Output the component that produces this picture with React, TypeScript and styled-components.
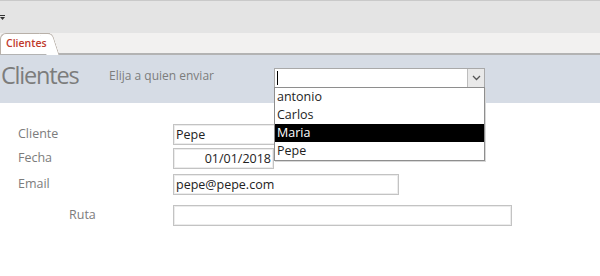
import React from "react";
import styled, { createGlobalStyle } from "styled-components";

const Global = createGlobalStyle`
  html, body { margin: 0; padding: 0; background: #ffffff; }
  body { width: 600px; height: 276px; overflow: hidden; font-family: "Open Sans", "Noto Sans", sans-serif; }
  * { box-sizing: border-box; }
`;

const Page = styled.div`
  width: 600px;
  height: 276px;
  display: flex;
  flex-direction: column;
  background: #ffffff;
`;

const QuickBar = styled.div`
  height: 33px;
  background: #e4e4e4;
  border-top: 1px solid #c9c9c9;
  display: flex;
  align-items: center;
  padding-left: 0;
`;

const QuickIcon = styled.svg`
  width: 5px;
  height: 5px;
`;

const TabStrip = styled.div`
  height: 22px;
  background: #f2f1f0;
  border-bottom: 2px solid #b3b3b3;
  display: flex;
  align-items: flex-end;
`;

const Tab = styled.div`
  position: relative;
  height: 21px;
  width: 50px;
  margin-bottom: -1px;
  background: #ffffff;
  border-top: 1px solid #b8b0a8;
  border-left: 1px solid #b8b0a8;
  border-top-left-radius: 6px;
  color: #c0392b;
  font-size: 10.5px;
  font-weight: 600;
  line-height: 19px;
  padding-left: 5px;
  z-index: 1;
  &::after {
    content: "";
    position: absolute;
    top: -1px;
    right: -6px;
    width: 12px;
    height: 21px;
    background: #ffffff;
    border-top: 1px solid #b8b0a8;
    border-right: 1px solid #b8b0a8;
    border-top-right-radius: 5px;
    transform: skewX(18deg);
    z-index: -1;
  }
`;

const Header = styled.div`
  position: relative;
  height: 48px;
  background: #d6dce5;
  display: flex;
  align-items: flex-start;
`;

const Title = styled.div`
  margin-left: 1px;
  margin-top: 4px;
  font-size: 23.5px;
  letter-spacing: -1.2px;
  line-height: 32px;
  color: #7c7c7c;
  width: 108px;
`;

const Prompt = styled.div`
  margin-top: 12px;
  font-size: 12px;
  line-height: 18px;
  color: #7c7c7c;
  width: 165px;
`;

const ComboWrap = styled.div`
  position: relative;
  margin-top: 13px;
  width: 211px;
`;

const Combo = styled.div`
  height: 20px;
  width: 211px;
  background: #ffffff;
  border: 1px solid #a9a9a9;
  display: flex;
  align-items: stretch;
`;

const Caret = styled.div`
  width: 1px;
  height: 14px;
  background: #000;
  margin: 2px 0 0 2px;
`;

const ComboButton = styled.div`
  margin-left: auto;
  width: 17px;
  background: #e9e9e9;
  border-left: 1px solid #bdbdbd;
  display: flex;
  align-items: center;
  justify-content: center;
`;

const List = styled.div`
  position: absolute;
  top: 19px;
  left: 0;
  width: 211px;
  background: #ffffff;
  border: 1px solid #8e8e8e;
  z-index: 5;
  box-shadow: 1px 1px 0 #d8d8d8;
`;

const Item = styled.div<{ $selected?: boolean }>`
  height: 18px;
  line-height: 18px;
  padding-left: 2px;
  font-size: 12.5px;
  color: ${(p) => (p.$selected ? "#ffffff" : "#1e1e1e")};
  background: ${(p) => (p.$selected ? "#000000" : "transparent")};
`;

const Form = styled.div`
  display: flex;
  flex-direction: column;
  padding-top: 21px;
`;

const Row = styled.div<{ $gap: number }>`
  display: flex;
  align-items: center;
  margin-top: ${(p) => p.$gap}px;
  height: 21px;
`;

const Label = styled.div<{ $indent: number }>`
  width: 173px;
  padding-left: ${(p) => p.$indent}px;
  font-size: 12.5px;
  line-height: 18px;
  margin-top: -2px;
  color: #7c7c7c;
`;

const Field = styled.div<{ $width: number; $align?: string }>`
  width: ${(p) => p.$width}px;
  height: 21px;
  border: 1px solid #c3c3c3;
  box-shadow: inset 0 0 0 1px #ececec;
  font-size: 12.5px;
  line-height: 19px;
  color: #222222;
  padding: 0 2px;
  text-align: ${(p) => p.$align || "left"};
  background: #ffffff;
`;

const items = ["antonio", "Carlos", "Maria", "Pepe"];

export default function App() {
  return (
    <Page>
      <Global />
      <QuickBar>
        <QuickIcon viewBox="0 0 5 5">
          <rect x="0" y="0" width="5" height="1" fill="#333" />
          <polygon points="0,2 5,2 2.5,5" fill="#333" />
        </QuickIcon>
      </QuickBar>
      <TabStrip>
        <Tab>Clientes</Tab>
      </TabStrip>
      <Header>
        <Title>Clientes</Title>
        <Prompt>Elija a quien enviar</Prompt>
        <ComboWrap>
          <Combo>
            <Caret />
            <ComboButton>
              <svg width="9" height="6" viewBox="0 0 9 6">
                <polyline points="1,1 4.5,4.5 8,1" fill="none" stroke="#555" strokeWidth="1.3" />
              </svg>
            </ComboButton>
          </Combo>
          <List>
            {items.map((it) => (
              <Item key={it} $selected={it === "Maria"}>
                {it}
              </Item>
            ))}
          </List>
        </ComboWrap>
      </Header>
      <Form>
        <Row $gap={0}>
          <Label $indent={18}>Cliente</Label>
          <Field $width={226}>Pepe</Field>
        </Row>
        <Row $gap={3}>
          <Label $indent={18}>Fecha</Label>
          <Field $width={101} $align="right">01/01/2018</Field>
        </Row>
        <Row $gap={5}>
          <Label $indent={18}>Email</Label>
          <Field $width={226}>pepe@pepe.com</Field>
        </Row>
        <Row $gap={10}>
          <Label $indent={69}>Ruta</Label>
          <Field $width={339} />
        </Row>
      </Form>
    </Page>
  );
}
